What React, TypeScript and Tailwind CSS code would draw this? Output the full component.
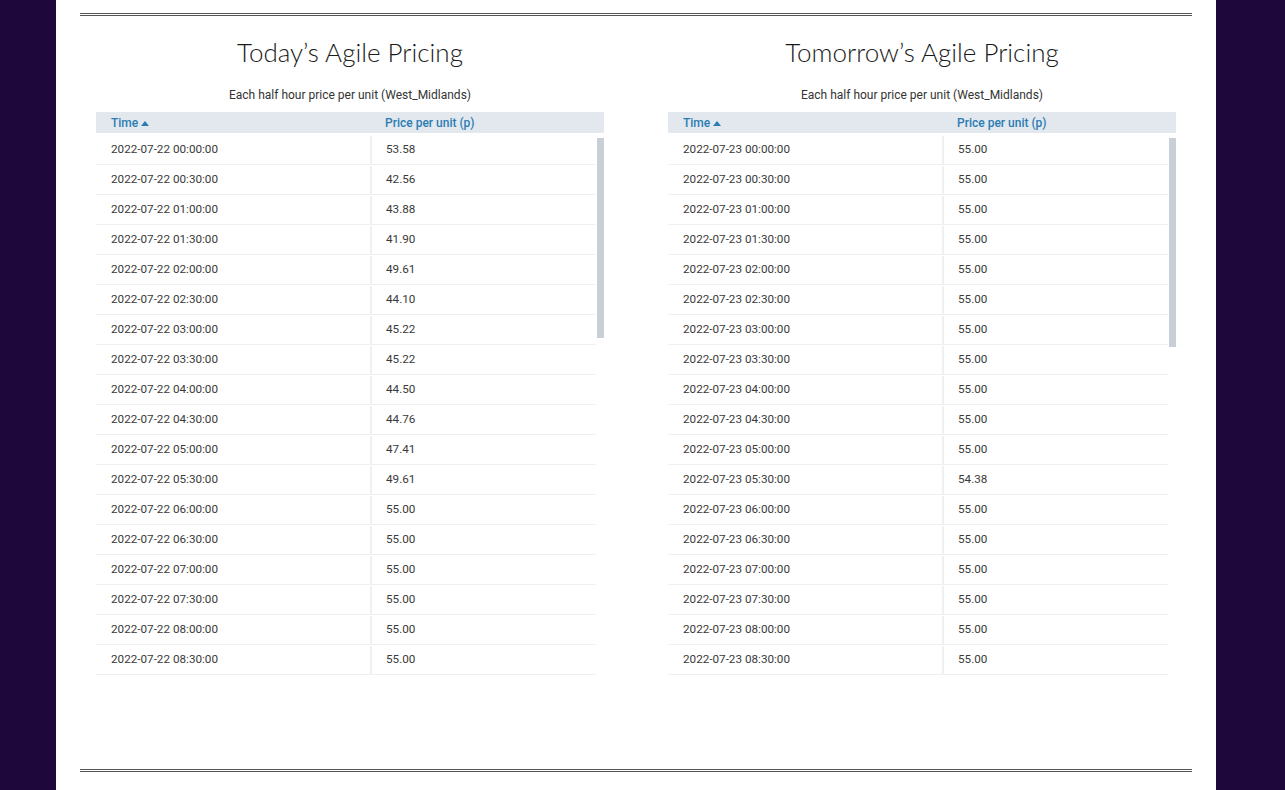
import React from "react";

const times = [
  "00:00:00", "00:30:00", "01:00:00", "01:30:00", "02:00:00", "02:30:00",
  "03:00:00", "03:30:00", "04:00:00", "04:30:00", "05:00:00", "05:30:00",
  "06:00:00", "06:30:00", "07:00:00", "07:30:00", "08:00:00", "08:30:00",
];

const todayPrices = [
  "53.58", "42.56", "43.88", "41.90", "49.61", "44.10", "45.22", "45.22", "44.50",
  "44.76", "47.41", "49.61", "55.00", "55.00", "55.00", "55.00", "55.00", "55.00",
];

const tomorrowPrices = [
  "55.00", "55.00", "55.00", "55.00", "55.00", "55.00", "55.00", "55.00", "55.00",
  "55.00", "55.00", "54.38", "55.00", "55.00", "55.00", "55.00", "55.00", "55.00",
];

function PriceTable({
  title,
  date,
  prices,
  thumb,
}: {
  title: string;
  date: string;
  prices: string[];
  thumb: number;
}) {
  return (
    <div className="w-[508px]">
      <h2
        className="mt-[20px] h-[32px] text-center text-[26px] leading-[32px] font-light text-[#1a1a1a]"
        style={{ fontFamily: "Lato, 'Open Sans', sans-serif" }}
      >
        {title}
      </h2>
      <div className="mt-[19px] h-[16px] text-center text-[12px] leading-[16px] text-[#333]">
        Each half hour price per unit (West_Midlands)
      </div>
      <div className="mt-[9px] flex h-[21px] w-[508px] items-center bg-[#e3e8ef] pt-[1px] text-[12px] font-medium text-[#2a7db3]">
        <div className="flex w-[275px] items-center gap-[3px] pl-[15px]">
          <span>Time</span>
          <svg width="8" height="5" viewBox="0 0 8 5" className="mt-[1px]">
            <polygon points="0,5 8,5 4,0" fill="#2a7db3" />
          </svg>
        </div>
        <div className="pl-[14px]">Price per unit (p)</div>
      </div>
      <div className="relative mt-[2px] h-[540px] overflow-hidden">
        {prices.map((p, i) => (
          <div
            key={i}
            className="flex h-[30px] w-[500px] items-center border-b border-[#f0f0f0] pt-[1px] text-[11.7px] text-[#3a3a3a]"
          >
            <div className="flex h-full w-[276px] items-center border-r-2 border-[#f0f0f0] pl-[15px]">
              {date} {times[i]}
            </div>
            <div className="pl-[14px]">{p}</div>
          </div>
        ))}
        <div
          className="absolute left-[501px] top-[3px] w-[7px] bg-[#c8cfd7]"
          style={{ height: thumb }}
        />
      </div>
    </div>
  );
}

export default function App() {
  return (
    <div
      className="h-[790px] overflow-hidden bg-[#1e083b]"
      style={{ fontFamily: "Roboto, 'Liberation Sans', sans-serif" }}
    >
      <div className="ml-[56px] h-full w-[1160px] bg-white px-6 pt-[13px]">
        <div className="border-t-[3px] border-double border-[#555]" />
        <div className="grid grid-cols-2 gap-16 px-4">
          <PriceTable title="Today’s Agile Pricing" date="2022-07-22" prices={todayPrices} thumb={200} />
          <PriceTable title="Tomorrow’s Agile Pricing" date="2022-07-23" prices={tomorrowPrices} thumb={209} />
        </div>
        <div className="mt-[94px] border-t-[3px] border-double border-[#555]" />
      </div>
    </div>
  );
}
